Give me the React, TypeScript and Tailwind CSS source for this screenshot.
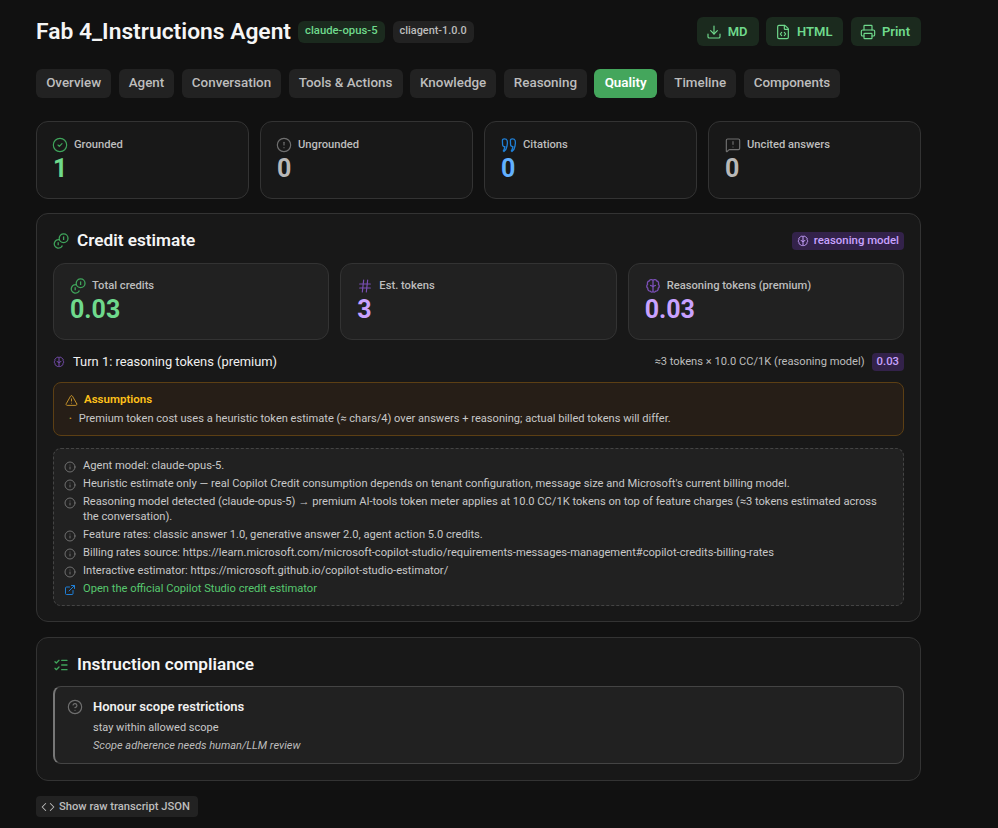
import React from 'react';
import {
  CircleAlert,
  CircleCheck,
  CircleHelp,
  Code,
  Download,
  ExternalLink,
  FileCode,
  Hash,
  Info,
  ListChecks,
  MessageSquareWarning,
  Printer,
  TriangleAlert,
} from 'lucide-react';

type IconProps = { className?: string };

// two coins, lucide has no match for these
const CoinsIcon = ({ className }: IconProps) => (
  <svg viewBox="0 0 16 16" fill="none" stroke="currentColor" strokeWidth="1.3" className={className}>
    <circle cx="10.6" cy="5.2" r="4.4" />
    <path d="M10.6 3.4v3.6" />
    <path d="M6.6 6.8a4.2 4.2 0 1 0 2.800 5.600" />
    <path d="M5.2 9.2v3" />
  </svg>
);

const BrainIcon = ({ className }: IconProps) => (
  <svg viewBox="0 0 16 16" fill="none" stroke="currentColor" strokeWidth="1.3" className={className}>
    <path d="M8 2.200C7 1.200 4.800 1.400 4.200 3 2.600 3.400 2 5 2.600 6.200 1.400 7.400 1.500 9.400 2.800 10.200 2.600 12 3.800 13.200 5.200 13.200 6 14.400 7.400 14.400 8 13.600 8.600 14.400 10 14.400 10.800 13.200 12.200 13.200 13.400 12 13.200 10.200 14.500 9.400 14.600 7.400 13.400 6.200 14 5 13.400 3.400 11.800 3 11.200 1.400 9 1.200 8 2.200Z" />
    <path d="M8 2.200v11.400M5 7.400c1.200 0 2.200.6 3 1.600.8-1 1.800-1.600 3-1.600" />
  </svg>
);

const QuoteIcon = ({ className }: IconProps) => (
  <svg viewBox="0 0 16 16" fill="none" stroke="currentColor" strokeWidth="1.3" className={className}>
    <path d="M1.400 3.600C1.400 2.400 2.200 1.800 3.400 1.800S5.800 2.400 6.200 3.600c.4 1.400.2 3.400-.2 5.400-.4 2.200-1.400 4.400-3 5.400l-.6-.6c.8-1.200 1.200-2.600 1.400-4.200-1.200 0-2.200-.6-2.200-1.800Z" />
    <path d="M9.400 3.600C9.400 2.400 10.200 1.800 11.400 1.800s2.400.6 2.800 1.800c.4 1.400.2 3.400-.2 5.400-.4 2.200-1.400 4.400-3 5.400l-.6-.6c.8-1.200 1.200-2.600 1.400-4.200-1.200 0-2.200-.6-2.200-1.800Z" />
  </svg>
);

const tabs = ['Overview', 'Agent', 'Conversation', 'Tools & Actions', 'Knowledge', 'Reasoning', 'Quality', 'Timeline', 'Components'];

const stats = [
  { label: 'Grounded', value: '1', icon: <CircleCheck className="w-4 h-4 -ml-px text-[#3fa45b]" strokeWidth={1.75} />, color: 'text-[#6fd98c]' },
  { label: 'Ungrounded', value: '0', icon: <CircleAlert className="w-4 h-4 -ml-px text-[#6f6f6f]" strokeWidth={1.75} />, color: 'text-[#b8b8b8]' },
  { label: 'Citations', value: '0', icon: <QuoteIcon className="w-4 h-4 text-[#1f7fd6]" />, color: 'text-[#62b0ff]' },
  { label: 'Uncited answers', value: '0', icon: <MessageSquareWarning className="w-4 h-4 text-[#6f6f6f]" strokeWidth={1.75} />, color: 'text-[#b8b8b8]' },
];

const credits = [
  { label: 'Total credits', value: '0.03', icon: <CoinsIcon className="w-4 h-4 text-[#3fa45b]" />, color: 'text-[#6fd98c]' },
  { label: 'Est. tokens', value: '3', icon: <Hash className="w-4 h-4 text-[#7a4fb5]" strokeWidth={1.75} />, color: 'text-[#c9a2ff]' },
  { label: 'Reasoning tokens (premium)', value: '0.03', icon: <BrainIcon className="w-4 h-4 text-[#7a4fb5]" />, color: 'text-[#c9a2ff]' },
];

const notes = [
  'Agent model: claude-opus-5.',
  "Heuristic estimate only — real Copilot Credit consumption depends on tenant configuration, message size and Microsoft's current billing model.",
  'Reasoning model detected (claude-opus-5) → premium AI-tools token meter applies at 10.0 CC/1K tokens on top of feature charges (≈3 tokens estimated across the conversation).',
  'Feature rates: classic answer 1.0, generative answer 2.0, agent action 5.0 credits.',
  'Billing rates source: https://learn.microsoft.com/microsoft-copilot-studio/requirements-messages-management#copilot-credits-billing-rates',
  'Interactive estimator: https://microsoft.github.io/copilot-studio-estimator/',
];

const ExportButton = ({ icon, label }: { icon: React.ReactNode; label: string }) => (
  <button className="h-[29px] pl-[9px] pr-[11px] flex items-center gap-[6px] rounded-md bg-[#1b2a1e] text-[#6fd98c] text-[13px] font-semibold">
    {icon}
    {label}
  </button>
);

const StatCard = ({ label, value, icon, color, box }: { label: string; value: string; icon: React.ReactNode; color: string; box: string }) => (
  <div className={`rounded-xl border border-[#333333] px-4 ${box}`}>
    <div className="flex items-center gap-[6px] h-[18px] text-[11.2px] font-medium text-[#bdbdbd]">
      {icon}
      <span>{label}</span>
    </div>
    <div className={`text-[25px] leading-[30px] font-bold ${color}`}>{value}</div>
  </div>
);

export default function App() {
  return (
    <div className="min-h-[828px] bg-[#111111] px-9 pt-[17px] pb-[11px] text-white font-['Roboto',sans-serif]">
      <div className="w-[885px]">
        {/* header */}
        <div className="flex items-center justify-between h-[29px]">
          <div className="flex items-center gap-2">
            <h1 className="text-[22.8px] font-semibold leading-[29px] text-[#f5f5f5] mr-[-1px]">Fab 4_Instructions Agent</h1>
            <span className="h-[22px] px-[7px] flex items-center rounded-md bg-[#1b2a1e] text-[#6fd98c] text-[11.3px] font-medium">claude-opus-5</span>
            <span className="h-[22px] px-[7px] flex items-center rounded-md bg-[#222222] text-[#bdbdbd] text-[10.9px] font-medium">cliagent-1.0.0</span>
          </div>
          <div className="flex items-center gap-[7.5px]">
            <ExportButton icon={<Download className="w-4 h-4" strokeWidth={1.75} />} label="MD" />
            <ExportButton icon={<FileCode className="w-4 h-4" strokeWidth={1.75} />} label="HTML" />
            <ExportButton icon={<Printer className="w-4 h-4" strokeWidth={1.75} />} label="Print" />
          </div>
        </div>

        {/* tabs */}
        <div className="flex items-center gap-[7.3px] mt-[23px]">
          {tabs.map((t) => (
            <button
              key={t}
              className={`h-[29px] px-[10.15px] pb-px rounded-md text-[13.4px] font-medium ${t === 'Quality' ? 'bg-[#44a65c] text-white font-semibold' : 'bg-[#222222] text-[#bdbdbd]'}`}
            >
              {t}
            </button>
          ))}
        </div>

        {/* top stats */}
        <div className="grid grid-cols-4 gap-[11px] h-[78px] mt-[23px]">
          {stats.map((s) => (
            <StatCard key={s.label} {...s} box="bg-[#181818] pt-[14px]" />
          ))}
        </div>

        {/* credit estimate */}
        <section className="mt-[14px] rounded-xl border border-[#333333] bg-[#181818] px-4 pt-4 h-[409px]">
          <div className="flex items-center justify-between h-[22px]">
            <div className="flex items-center gap-2">
              <CoinsIcon className="w-4 h-4 text-[#3fa45b]" />
              <h2 className="text-[17.2px] font-semibold text-[#f5f5f5]">Credit estimate</h2>
            </div>
            <span className="h-[18px] px-[5px] flex items-center gap-[5px] rounded bg-[#33224a] text-[#c9a2ff] text-[11.4px] font-medium">
              <BrainIcon className="w-3 h-3" />
              reasoning model
            </span>
          </div>

          <div className="grid grid-cols-3 gap-[11px] h-[77px] mt-[11px]">
            {credits.map((c) => (
              <StatCard key={c.label} {...c} box="bg-[#212121] pt-[13px]" />
            ))}
          </div>

          <div className="flex items-center justify-between mt-[13px] h-[18px]">
            <div className="flex items-center gap-2 text-[12.9px] text-[#f0f0f0]">
              <BrainIcon className="w-3 h-3 text-[#7a4fb5]" />
              Turn 1: reasoning tokens (premium)
            </div>
            <div className="flex items-center gap-[7px] text-[11.15px] text-[#bdbdbd]">
              ≈3 tokens × 10.0 CC/1K (reasoning model)
              <span className="h-[18px] px-[5px] flex items-center rounded bg-[#33224a] text-[#c9a2ff] text-[11.3px] font-medium">0.03</span>
            </div>
          </div>

          <div className="mt-[11px] h-[54px] rounded-lg border border-[#5c3f14] bg-[#261e17] pl-[10px] pr-3 pt-2">
            <div className="flex items-center gap-[6px] h-[18px] text-[11.5px] font-semibold text-[#ffc21a]">
              <TriangleAlert className="w-[13px] h-[13px] ml-px text-[#c9962b]" strokeWidth={1.75} />
              Assumptions
            </div>
            <div className="flex items-center gap-[7px] ml-[5px] mt-px h-[18px] text-[11.08px] text-[#c8c8c8]">
              <span className="text-[#c9962b] text-[8px]">•</span>
              Premium token cost uses a heuristic token estimate (≈ chars/4) over answers + reasoning; actual billed tokens will differ.
            </div>
          </div>

          <div className="mt-3 h-[158px] rounded-lg border border-dashed border-[#444444] bg-[#212121] pl-[10px] pr-4 pt-[9px]">
            <ul className="flex flex-col gap-[3px]">
              {notes.map((n) => (
                <li key={n} className="flex gap-[7px] text-[11.15px] leading-[15px] text-[#c8c8c8]">
                  <Info className="w-3 h-3 mt-[3px] shrink-0 text-[#7a7a7a]" strokeWidth={1.75} />
                  <span>{n}</span>
                </li>
              ))}
              <li className="flex gap-[7px] text-[11.15px] leading-[15px] text-[#57c86f]">
                <ExternalLink className="w-3 h-3 mt-[3px] shrink-0 text-[#1f7fd6]" />
                <span>Open the official Copilot Studio credit estimator</span>
              </li>
            </ul>
          </div>
        </section>

        {/* compliance */}
        <section className="mt-[15px] rounded-xl border border-[#333333] bg-[#181818] px-4 pt-4 h-[144px]">
          <div className="flex items-center gap-2 h-[22px]">
            <ListChecks className="w-4 h-4 text-[#3fa45b]" />
            <h2 className="text-[17.2px] font-semibold text-[#f5f5f5]">Instruction compliance</h2>
          </div>
          <div className="mt-[10px] h-[78px] rounded-lg border border-[#444444] border-l-2 border-l-[#777777] bg-[#212121] pl-3 pt-[10px] flex gap-[10px]">
            <CircleHelp className="w-4 h-4 mt-[2px] text-[#6f6f6f]" strokeWidth={1.75} />
            <div>
              <div className="text-[13px] leading-[20px] font-semibold text-[#f0f0f0]">Honour scope restrictions</div>
              <div className="mt-[2px] text-[11px] leading-[18px] text-[#c8c8c8]">stay within allowed scope</div>
              <div className="text-[11px] leading-[18px] italic text-[#bdbdbd]">Scope adherence needs human/LLM review</div>
            </div>
          </div>
        </section>

        <button className="mt-[15px] h-[21px] pl-[5px] pr-2 pt-px flex items-center gap-[4px] rounded bg-[#222222] text-[11.2px] font-medium text-[#bdbdbd]">
          <Code className="w-[14px] h-[14px]" strokeWidth={1.75} />
          Show raw transcript JSON
        </button>
      </div>
    </div>
  );
}
